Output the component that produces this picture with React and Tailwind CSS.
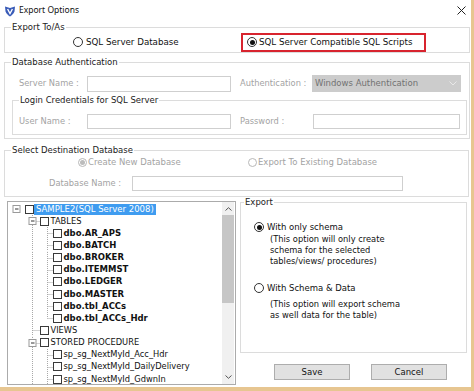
import React from "react";

const V = "font-['DejaVu_Sans',Verdana,sans-serif]";

function Radio({ checked = false, disabled = false, small = false }) {
  const size = small ? "w-[9px] h-[9px]" : "w-[10px] h-[10px]";
  const border = disabled ? "border-[#b8b8b8]" : "border-[#333]";
  const dot = disabled ? "bg-[#bcbcbc]" : "bg-[#111]";
  return (
    <span className={`${size} ${border} shrink-0 rounded-full border bg-white flex items-center justify-center`}>
      {checked ? <span className={`${dot} w-[5px] h-[5px] rounded-full`} /> : null}
    </span>
  );
}

function Legend({ children, className = "" }) {
  return (
    <legend className={`ml-[6px] px-[1px] leading-[12px] text-[8.5px] text-[#222] ${className}`}>{children}</legend>
  );
}

const rows = [
  { lvl: 0, text: "SAMPLE2(SQL Server 2008)", expand: true, sel: true },
  { lvl: 1, text: "TABLES", expand: true },
  { lvl: 2, text: "dbo.AR_APS", bold: true },
  { lvl: 2, text: "dbo.BATCH", bold: true },
  { lvl: 2, text: "dbo.BROKER", bold: true },
  { lvl: 2, text: "dbo.ITEMMST", bold: true },
  { lvl: 2, text: "dbo.LEDGER", bold: true },
  { lvl: 2, text: "dbo.MASTER", bold: true },
  { lvl: 2, text: "dbo.tbl_ACCs", bold: true },
  { lvl: 2, text: "dbo.tbl_ACCs_Hdr", bold: true, last: true },
  { lvl: 1, text: "VIEWS" },
  { lvl: 1, text: "STORED PROCEDURE", expand: true },
  { lvl: 2, text: "sp_sg_NextMyId_Acc_Hdr" },
  { lvl: 2, text: "sp_sg_NextMyId_DailyDelivery" },
  { lvl: 2, text: "sp_sg_NextMyId_GdwnIn" },
];

function ExpandBox({ cx }) {
  return (
    <g>
      <rect x={cx - 3.5} y={2.5} width={7} height={7} fill="#fff" stroke="#9a9a9a" strokeWidth="1" />
      <line x1={cx - 1.5} y1={6} x2={cx + 2} y2={6} stroke="#333" strokeWidth="1" />
    </g>
  );
}

function TreeRow({ r }) {
  const w = r.lvl === 0 ? 17 : r.lvl === 1 ? 32 : 45;
  const H = 12.15;
  const dot = { stroke: "#a8a8a8", strokeWidth: 1, strokeDasharray: "1 1" };
  return (
    <div className="flex h-[12.15px] items-center">
      <svg width={w} height={H} className="shrink-0">
        {r.lvl === 0 ? <ExpandBox cx={8.5} /> : null}
        {r.lvl === 1 ? (
          <g>
            <line x1={24.5} y1={0} x2={24.5} y2={H} {...dot} />
            <line x1={24.5} y1={6.5} x2={32} y2={6.5} {...dot} />
            {r.expand ? <ExpandBox cx={24.5} /> : null}
          </g>
        ) : null}
        {r.lvl === 2 ? (
          <g>
            <line x1={24.5} y1={0} x2={24.5} y2={H} {...dot} />
            <line x1={39.5} y1={0} x2={39.5} y2={r.last ? 6.5 : H} {...dot} />
            <line x1={39.5} y1={6.5} x2={45} y2={6.5} {...dot} />
          </g>
        ) : null}
      </svg>
      <span className="w-[9px] h-[9px] shrink-0 border border-[#3a3a3a] bg-white" />
      {r.sel ? (
        <span className="ml-0 px-[2px] bg-[#3f9cf0] text-white text-[8.5px] leading-[11px] whitespace-nowrap">{r.text}</span>
      ) : (
        <span
          className={`${r.bold ? "font-bold text-[8.5px]" : "text-[8.3px]"} ml-[1.5px] leading-[11px] text-[#111] whitespace-nowrap`}
        >
          {r.text}
        </span>
      )}
    </div>
  );
}

export default function App() {
  return (
    <div
      className={`${V} w-[474px] h-[391px] overflow-hidden bg-white border-r-[3px] border-b-[4px] border-[#e7c691] text-[#222] flex flex-col`}
    >
      {/* Title bar */}
      <div className="h-[21px] shrink-0 flex items-center">
        <svg width="12" height="12" viewBox="0 0 12 12" className="ml-[4px] shrink-0">
          <path d="M1 1.5 L6 3 L11 1.5 L10.5 6.5 C9.5 9 7.5 10.5 6 11.5 C4.5 10.5 2.5 9 1.5 6.5 Z" fill="#3a5cb8" />
          <path d="M3.6 4 L6 8.6 L8.4 4" fill="none" stroke="#fff" strokeWidth="1.4" />
        </svg>
        <span className="ml-[3px] font-['Noto_Sans',sans-serif] text-[8.5px] text-[#111]">Export Options</span>
        <svg width="9" height="9" viewBox="0 0 9 9" className="ml-auto mr-[5px] shrink-0">
          <path d="M0.5 0.5 L8.5 8.5 M8.5 0.5 L0.5 8.5" stroke="#222" strokeWidth="1" />
        </svg>
      </div>

      {/* Export To/As */}
      <fieldset className="ml-[4px] w-[466px] border border-[#dcdcdc] pb-[1px]">
        <Legend>Export To/As</Legend>
        <div className="h-[18px] flex items-center">
          <div className="ml-[68px] w-[168px] flex items-center">
            <Radio />
            <span className="ml-[3px] text-[8.7px] leading-[12px] text-[#111] whitespace-nowrap">SQL Server Database</span>
          </div>
          <div className="w-[185px] h-[19px] border-2 border-[#d8242e] flex items-center pl-[4px]">
            <Radio checked />
            <span className="ml-[2px] text-[8.7px] leading-[12px] text-[#111] whitespace-nowrap">SQL Server Compatible SQL Scripts</span>
          </div>
        </div>
      </fieldset>

      {/* Database Authentication */}
      <fieldset className="mt-[3px] ml-[4px] w-[466px] border border-[#dcdcdc] pb-[3px]">
        <Legend>Database Authentication</Legend>
        <div className="mt-[7px] flex items-center pl-[14px] h-[17px]">
          <span className="w-[68px] text-[8.3px] text-[#a3a3a3] whitespace-nowrap">Server Name :</span>
          <div className="w-[144px] h-[16px] border border-[#cfcfcf] bg-white" />
          <span className="ml-[9px] w-[72px] text-[8.3px] text-[#a3a3a3] whitespace-nowrap">Authentication :</span>
          <div className="w-[149px] h-[17px] bg-[#cccccc] flex items-center pl-[3px]">
            <span className="text-[8.5px] text-[#727272] whitespace-nowrap">Windows Authentication</span>
            <svg width="8" height="5" viewBox="0 0 8 5" className="ml-auto mr-[4px]">
              <path d="M0.5 0.5 L4 4 L7.5 0.5" fill="none" stroke="#e8e8e8" strokeWidth="1" />
            </svg>
          </div>
        </div>
        <fieldset className="mt-[2px] ml-[7px] w-[455px] border border-[#dcdcdc] pb-[5px]">
          <Legend className="ml-[5px]">Login Credentials for SQL Server</Legend>
          <div className="mt-[8px] flex items-center pl-[6px] h-[15px]">
            <span className="w-[68px] text-[8.3px] text-[#a3a3a3] whitespace-nowrap">User Name :</span>
            <div className="w-[144px] h-[15px] border border-[#cfcfcf] bg-white" />
            <span className="ml-[9px] w-[73px] text-[8.3px] text-[#a3a3a3] whitespace-nowrap">Password :</span>
            <div className="w-[147px] h-[15px] border border-[#cfcfcf] bg-white" />
          </div>
        </fieldset>
      </fieldset>

      {/* Select Destination Database */}
      <fieldset className="mt-[5px] ml-[4px] w-[465px] border border-[#dcdcdc] pb-[5px]">
        <Legend>Select Destination Database</Legend>
        <div className="h-[12px] flex items-center pl-[73px]">
          <div className="w-[170px] flex items-center">
            <Radio checked disabled small />
            <span className="ml-[1px] text-[8.5px] text-[#a3a3a3] whitespace-nowrap">Create New Database</span>
          </div>
          <Radio disabled small />
          <span className="ml-[1px] text-[8.5px] text-[#a3a3a3] whitespace-nowrap">Export To Existing Database</span>
        </div>
        <div className="mt-[8px] flex items-center pl-[44px] h-[15px]">
          <span className="w-[83px] text-[8.3px] text-[#a3a3a3] whitespace-nowrap">Database Name :</span>
          <div className="w-[271px] h-[15px] border border-[#cfcfcf] bg-white" />
        </div>
      </fieldset>

      {/* Bottom section */}
      <div className="flex">
        {/* Tree */}
        <div className="mt-[4px] ml-[7px] w-[229px] h-[184px] border border-[#ababab] flex overflow-hidden">
          <div className="flex-1 pt-[1px] overflow-hidden">
            {rows.map((r, i) => (
              <TreeRow key={i} r={r} />
            ))}
          </div>
          <div className="w-[12px] mr-[1px] bg-[#f0f0f0] flex flex-col">
            <div className="h-[13px] flex items-center justify-center">
              <svg width="7" height="4" viewBox="0 0 7 4">
                <path d="M0.5 3.5 L3.5 0.7 L6.5 3.5" fill="none" stroke="#555" strokeWidth="1" />
              </svg>
            </div>
            <div className="h-[88px] bg-[#c6c6c6]" />
            <div className="flex-1" />
            <div className="h-[14px] flex items-center justify-center">
              <svg width="7" height="4" viewBox="0 0 7 4">
                <path d="M0.5 0.5 L3.5 3.3 L6.5 0.5" fill="none" stroke="#555" strokeWidth="1" />
              </svg>
            </div>
          </div>
        </div>

        {/* Right column */}
        <div className="ml-[3px] w-[228px] flex flex-col">
          <fieldset className="ml-[1px] w-[227px] h-[156px] border border-[#dcdcdc]">
            <legend className="ml-[3px] px-[1px] leading-[10px] text-[8.5px] text-[#222]">Export</legend>
            <div className="mt-[14px] h-[12px] flex items-center pl-[13px]">
              <Radio checked />
              <span className="ml-[3px] text-[8.5px] text-[#111] whitespace-nowrap">With only schema</span>
            </div>
            <div className="mt-[1px] pl-[29px] text-[8.3px] leading-[11px] text-[#111]">
              <div>(This option will only create</div>
              <div>schema for the selected</div>
              <div>tables/views/ procedures)</div>
            </div>
            <div className="mt-[15px] h-[12px] flex items-center pl-[13px]">
              <Radio />
              <span className="ml-[3px] text-[8.5px] text-[#111] whitespace-nowrap">With Schema &amp; Data</span>
            </div>
            <div className="mt-[5px] pl-[29px] text-[8.3px] leading-[11px] text-[#111]">
              <div>(This option will export schema</div>
              <div>as well data for the table)</div>
            </div>
          </fieldset>
          <div className="mt-[11px] flex">
            <button className="ml-[35px] w-[76px] h-[16px] bg-[#e1e1e1] border border-[#adadad] text-[8.5px] text-[#111] flex items-center justify-center">
              Save
            </button>
            <button className="ml-[21px] w-[76px] h-[16px] bg-[#e1e1e1] border border-[#adadad] text-[8.5px] text-[#111] flex items-center justify-center">
              Cancel
            </button>
          </div>
        </div>
      </div>
    </div>
  );
}
